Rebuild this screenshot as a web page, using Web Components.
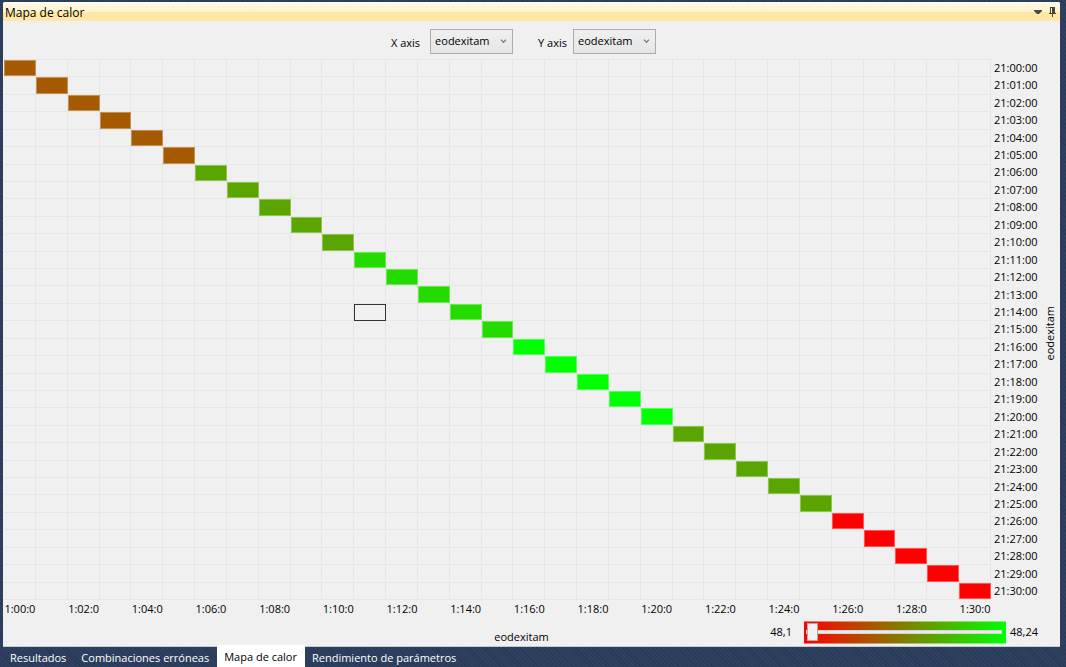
<!DOCTYPE html>
<html lang="es">
<head>
<meta charset="utf-8">
<title>Mapa de calor</title>
<style>
  html, body { height: 100%; }
  body { margin: 0; font: 11px/16px "Open Sans", "Noto Sans", sans-serif; color: #000; overflow: hidden; }
</style>
</head>
<body>
<dock-window>
  <dock-panel heading="Mapa de calor">
    <axis-toolbar slot="toolbar">
      <axis-picker label="X axis" value="eodexitam"></axis-picker>
      <axis-picker label="Y axis" value="eodexitam"></axis-picker>
    </axis-toolbar>
    <heat-map></heat-map>
    <span slot="x-title">eodexitam</span>
    <color-legend slot="legend" min="48,1" max="48,24"></color-legend>
    <span slot="y-title">eodexitam</span>
  </dock-panel>
  <dock-tabs slot="tabs">
    <dock-tab>Resultados</dock-tab>
    <dock-tab>Combinaciones erróneas</dock-tab>
    <dock-tab active>Mapa de calor</dock-tab>
    <dock-tab>Rendimiento de parámetros</dock-tab>
  </dock-tabs>
</dock-window>

<script>
class BaseElement extends HTMLElement {
  connectedCallback() {
    if (this.shadowRoot) return;
    this.attachShadow({ mode: 'open' }).innerHTML = this.render();
  }
}

customElements.define('dock-window', class extends BaseElement {
  render() {
    return `<style>
      :host { display: flex; flex-direction: column; height: 100vh; box-sizing: border-box; padding: 2px 6px 0 3px;
        background: repeating-linear-gradient(45deg, #293955 0 1px, #2f4161 1px 3px); }
      main { flex: 1; min-height: 0; display: flex; }
    </style><main><slot></slot></main><slot name="tabs"></slot>`;
  }
});

customElements.define('dock-panel', class extends BaseElement {
  render() {
    return `<style>
      :host { flex: 1; min-width: 0; display: flex; flex-direction: column; background: #f0f0f0;
        border-radius: 2px 2px 0 0; border-bottom: 1px solid #c3c9d2; box-sizing: border-box; overflow: hidden; }
      header { display: flex; align-items: center; height: 19px; padding: 0 1px 0 2px;
        background: linear-gradient(#fffbee 0, #fff2cb 50%, #ffe8a6 51%, #ffe8a6 100%); }
      h1 { flex: 1; margin: 0; font: inherit; font-size: 12px; padding-top: 3px; }
      button { border: 0; background: none; padding: 2px 0 0; width: 14px; height: 19px; display: grid; place-items: center; }
      .body { flex: 1; min-height: 0; display: grid; grid-template-columns: 1fr 20px; }
      .chart { display: flex; flex-direction: column; min-width: 0; }
      .bar { height: 38px; }
      .plot { flex: 1; min-height: 0; display: flex; padding-left: 1px; }
      .foot { display: grid; height: 28px; align-items: center; }
      .foot > * { grid-area: 1 / 1; }
      .xt { justify-self: center; padding-top: 9px; }
      .lg { justify-self: end; }
      .yt { writing-mode: vertical-rl; transform: rotate(180deg); place-self: center; }
    </style>
    <header><h1>${this.getAttribute('heading')}</h1>
      <button aria-label="Menú"><svg width="8" height="5" viewBox="0 0 8 5"><path d="M0 0h8v1L5 4H3L0 1z" fill="#4a4a4a"/></svg></button>
      <button aria-label="Fijar"><svg width="8" height="11" viewBox="0 0 8 11" shape-rendering="crispEdges"><path d="M2 0h5v6h1v1H5v3H4V7H1V6h1zM3 1v5h1V1z" fill="#4a4238" fill-rule="evenodd"/></svg></button>
    </header>
    <div class="body">
      <div class="chart">
        <div class="bar"><slot name="toolbar"></slot></div>
        <div class="plot"><slot></slot></div>
        <div class="foot"><div class="xt"><slot name="x-title"></slot></div><div class="lg"><slot name="legend"></slot></div></div>
      </div>
      <div class="yt"><slot name="y-title"></slot></div>
    </div>`;
  }
});

customElements.define('axis-toolbar', class extends BaseElement {
  render() {
    return `<style>:host { display: flex; justify-content: center; gap: 25px; padding: 8px 0 0 4px; }</style><slot></slot>`;
  }
});

customElements.define('axis-picker', class extends BaseElement {
  render() {
    return `<style>
      :host { display: flex; align-items: center; gap: 10px; }
      :host(:last-child) { gap: 6px; }
      label { padding-top: 3px; }
      .box { display: grid; align-items: center; }
      .box > * { grid-area: 1 / 1; }
      select { appearance: none; width: 83px; height: 25px; margin: 0; padding: 0 16px 1px 4px; font: inherit; color: #000;
        border: 1px solid #acacac; border-radius: 0; background: linear-gradient(#f0f0f0, #e5e5e5); }
      svg { justify-self: end; margin-right: 6px; pointer-events: none; }
    </style>
    <label for="axis">${this.getAttribute('label')}</label>
    <div class="box"><select id="axis"><option>${this.getAttribute('value')}</option></select>
    <svg width="7" height="5" viewBox="0 0 7 5"><path d="M1 .7l2.500 2.600L6 .7" fill="none" stroke="#707070" stroke-width="1.200"/></svg></div>`;
  }
});

const SIZE = 31;
const BANDS = [[5, '#a55a00'], [10, '#5aa500'], [15, '#24db00'], [20, '#00ff00'], [25, '#5aa500'], [30, '#ff0000']];
const SELECTED = { row: 14, col: 11 };

customElements.define('heat-map', class extends BaseElement {
  render() {
    const pad = n => String(n).padStart(2, '0');
    let cells = '', rows = '', cols = '';
    for (let r = 0; r < SIZE; r++) {
      for (let c = 0; c < SIZE; c++) {
        const picked = r === SELECTED.row && c === SELECTED.col;
        const fill = r === c ? `<b style="background:${BANDS.find(b => r <= b[0])[1]}"></b>` : '';
        cells += `<i${picked ? ' class="sel"' : ''}>${fill}</i>`;
      }
      rows += `<span>21:${pad(r)}:00</span>`;
      cols += `<span>${r % 2 ? '' : `1:${pad(r)}:0`}</span>`;
    }
    return `<style>
      :host { flex: 1; min-width: 0; display: grid; grid-template: 1fr 18px / 1fr 49px; }
      .grid { display: grid; grid-template: repeat(${SIZE}, minmax(0, 1fr)) / repeat(${SIZE}, minmax(0, 1fr));
        border-top: 1px solid #e6e6e6; }
      i { display: grid; border: solid #e6e6e6; border-width: 0 1px 1px 0; }
      b { border: 1px solid #ffffff55; margin: 0 -1px 0 0; }
      .sel { border: 1px solid #333; }
      .rows { display: grid; grid-auto-rows: minmax(0, 1fr); align-items: center; padding-left: 3px; }
      .cols { display: grid; grid-template-columns: repeat(${SIZE}, minmax(0, 1fr)); line-height: 18px; }
      .cols span { display: flex; justify-content: center; white-space: nowrap; }
    </style>
    <div class="grid">${cells}</div><div class="rows">${rows}</div><div class="cols">${cols}</div>`;
  }
});

customElements.define('color-legend', class extends BaseElement {
  render() {
    return `<style>
      :host { display: grid; grid-template-columns: auto 202px 34px; align-items: center; }
      label { padding-right: 12px; }
      output { padding-left: 4px; }
      input { appearance: none; box-sizing: border-box; width: 202px; height: 23px; margin: 0; padding: 0 4px 0 2px;
        background: linear-gradient(90deg, #f00, #0f0); border: solid #ffffff70; border-width: 1px 0; }
      input::-webkit-slider-runnable-track { height: 4px; background: #e7eaea; border: 1px solid #d6d6d6; box-sizing: border-box; }
      input::-webkit-slider-thumb { appearance: none; width: 11px; height: 18px; margin-top: -8px; box-sizing: border-box;
        background: #f0f0f0; border: 1px solid #acacac; border-radius: 0; }
    </style>
    <label for="range">${this.getAttribute('min')}</label>
    <input id="range" type="range" min="0" max="14" value="0">
    <output for="range">${this.getAttribute('max')}</output>`;
  }
});

customElements.define('dock-tabs', class extends BaseElement {
  render() {
    return `<style>:host { display: flex; height: 20px; }</style><slot></slot>`;
  }
});

customElements.define('dock-tab', class extends BaseElement {
  render() {
    return `<style>
      :host { display: flex; }
      button { border: 0; margin: 0; padding: 2px 8px 0 7px; font: inherit; color: #fff; background: none; white-space: nowrap; }
      :host([active]) { margin-top: -2px; }
      :host([active]) button { background: #fff; color: #000; }
    </style><button><slot></slot></button>`;
  }
});
</script>
</body>
</html>
